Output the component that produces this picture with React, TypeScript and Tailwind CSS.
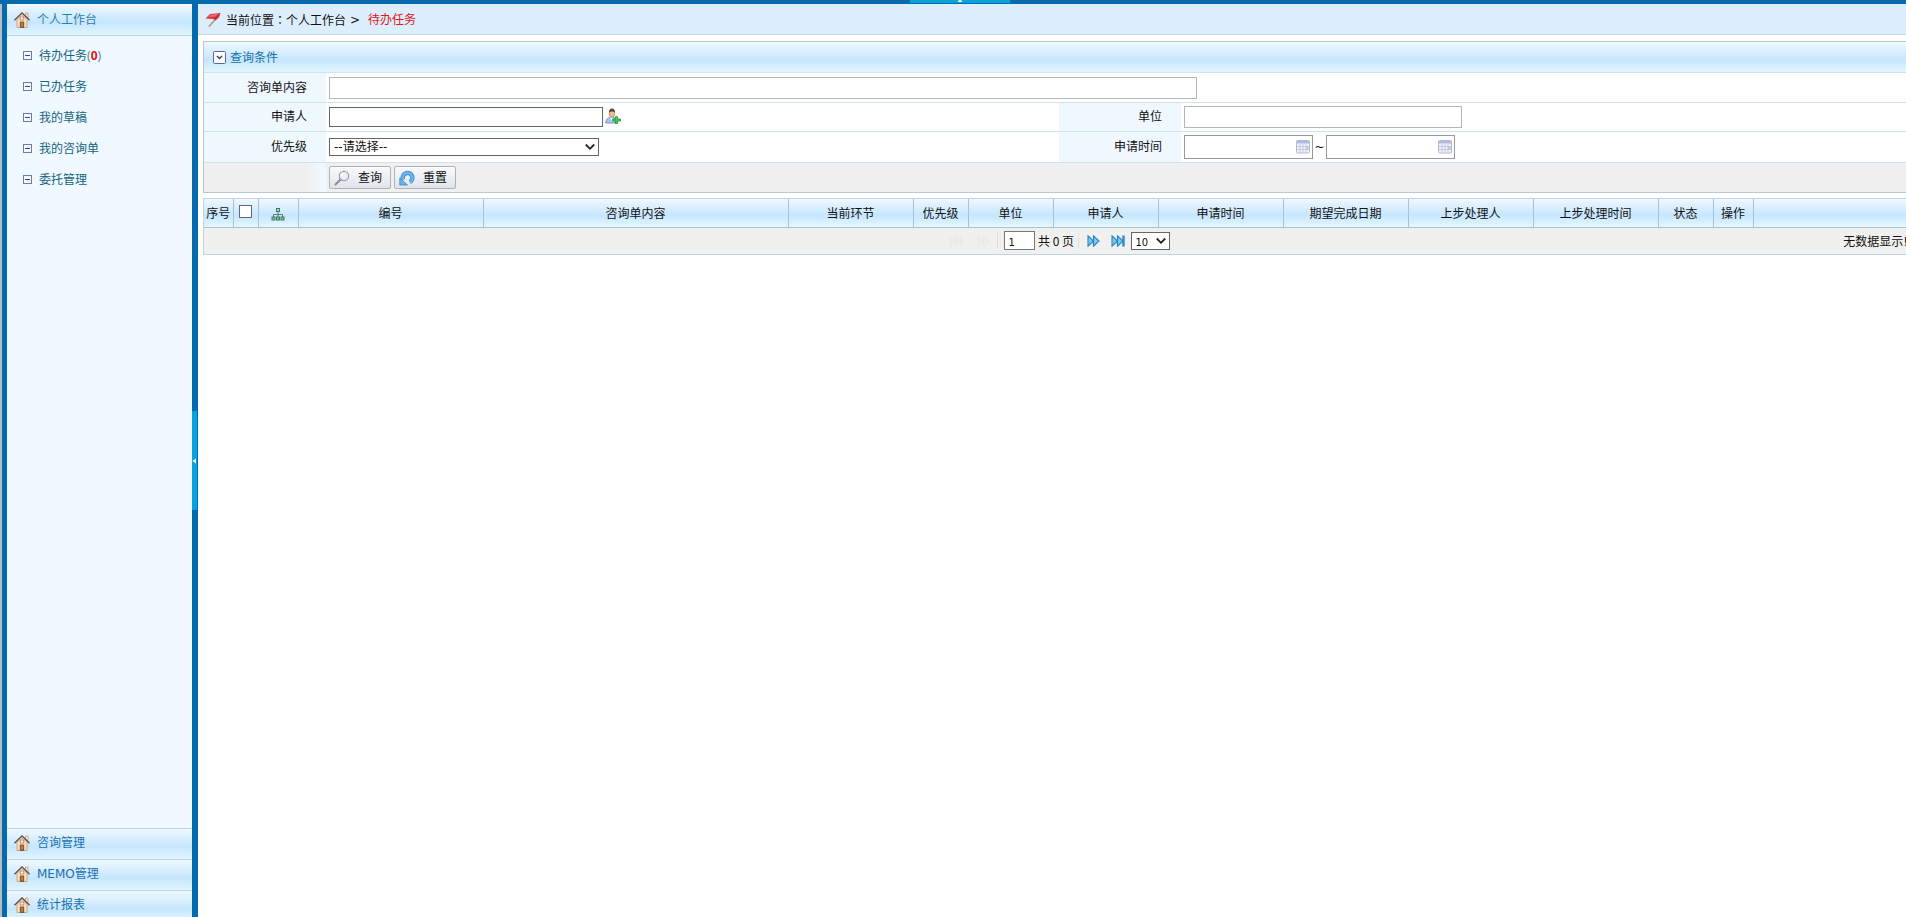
import type { ReactNode } from 'react'

const menuItems = [
  { label: '待办任务', count: 0 },
  { label: '已办任务' },
  { label: '我的草稿' },
  { label: '我的咨询单' },
  { label: '委托管理' },
]

const sections = ['咨询管理', 'MEMO管理', '统计报表']

const columns = [
  { label: '编号', width: 185 },
  { label: '咨询单内容', width: 305 },
  { label: '当前环节', width: 125 },
  { label: '优先级', width: 55 },
  { label: '单位', width: 85 },
  { label: '申请人', width: 105 },
  { label: '申请时间', width: 125 },
  { label: '期望完成日期', width: 125 },
  { label: '上步处理人', width: 125 },
  { label: '上步处理时间', width: 125 },
  { label: '状态', width: 55 },
  { label: '操作', width: 40 },
]

const barGradient = 'bg-linear-to-b from-[#eff8ff] from-0% via-[#c6e6fd] via-60% to-[#e2f6ff] to-100%'

function HouseIcon() {
  return (
    <svg width="16" height="16" viewBox="0 0 16 16" className="shrink-0" aria-hidden="true">
      <path d="M11.5 1h2.500v5.500l-2.500-2.500z" fill="#f8e4d6" stroke="#d08a6c" strokeWidth=".7" />
      <path d="M3 7.500 8 2.500l5 5V15.500H3z" fill="#fbe0bb" stroke="#c09a74" strokeWidth=".8" />
      <path d="M.5 8.200 8 .9l7.500 7.300" fill="none" stroke="#5a4a46" strokeWidth="1.300" />
      <rect x="6.200" y="5" width="3.600" height="3" fill="#fff4dd" stroke="#a87450" strokeWidth=".7" />
      <rect x="6.200" y="10" width="3.600" height="5.500" fill="#9a5c30" stroke="#6a4328" strokeWidth=".7" />
      <path d="M8 10.500v4" stroke="#e0b27a" strokeWidth=".8" />
    </svg>
  )
}

function MinusBox() {
  return (
    <svg width="9" height="9" viewBox="0 0 9 9" className="shrink-0" aria-hidden="true">
      <rect x=".5" y=".5" width="8" height="8" fill="#f5f7ff" stroke="#6a7bb0" />
      <path d="M2 4.500h5" stroke="#3a4a80" />
    </svg>
  )
}

function PinIcon() {
  return (
    <svg width="16" height="16" viewBox="0 0 16 16" className="shrink-0" aria-hidden="true">
      <path d="m11 6.500-7 8" stroke="#b59a92" strokeWidth="1.800" />
      <path d="M.5 6.500 5 2l10.500-1-1.500 4.500-3.500 3-2-1.500z" fill="#d9353a" />
      <path d="M3 5 5.500 2.700l8.500-.9-3.500 2.700z" fill="#ee6a6c" />
      <path d="m9 7 4.500-4.500" stroke="#b01c22" strokeWidth=".7" />
    </svg>
  )
}

function PersonAddIcon() {
  return (
    <svg width="16" height="16" viewBox="0 0 16 16" aria-hidden="true">
      <path d="M.8 15c0-4 2-5.500 5.700-5.500S12 11 12 15z" fill="#a9c8f2" stroke="#5d82bd" strokeWidth=".8" />
      <path d="m5 9.500 1.700 3 1.600-3z" fill="#fff" />
      <ellipse cx="7" cy="5.500" rx="2.700" ry="3.800" fill="#f1bd93" stroke="#9b6a45" strokeWidth=".6" />
      <path d="M4 5C3.800 2 5 .5 7 .5S10.200 2 10 5C9.300 3 4.700 3 4 5z" fill="#594238" />
      <path d="M10.500 8.700h2v2.300h2.800v2h-2.800v2.500h-2V13H7.800v-2h2.700z" fill="#3fd44c" stroke="#14902a" strokeWidth=".8" />
    </svg>
  )
}

function SearchIcon() {
  return (
    <svg width="16" height="16" viewBox="0 0 16 16" aria-hidden="true">
      <path d="m1.500 14.500 5-5" stroke="#8b8b93" strokeWidth="2" strokeLinecap="round" />
      <circle cx="10" cy="6" r="4.700" fill="#eeeefa" stroke="#a3a3ac" strokeWidth="1.300" />
      <path d="M7.500 5.500a3 3 0 0 1 2.500-2.300" fill="none" stroke="#fff" strokeWidth="1.200" />
    </svg>
  )
}

function ResetIcon() {
  return (
    <svg width="16" height="16" viewBox="0 0 16 16" aria-hidden="true">
      <path d="M4.200 9.800a4.800 4.800 0 1 1 6.600 2.200" fill="none" stroke="#3b87cc" strokeWidth="4.400" />
      <path d="M4.200 9.800a4.800 4.800 0 1 1 6.600 2.200" fill="none" stroke="#69b4ee" strokeWidth="3" />
      <path d="M.8 8v7h7.700z" fill="#69b4ee" stroke="#3b87cc" strokeWidth=".8" />
    </svg>
  )
}

function TreeIcon() {
  return (
    <svg width="14" height="14" viewBox="0 0 14 14" aria-hidden="true">
      <path d="M7 4v3M2.500 10V7.500h9V10M7 7.500V10" fill="none" stroke="#5f7f78" />
      <rect x="5.500" y="1.500" width="3" height="3" fill="#a8dcb4" stroke="#3f7a68" />
      <rect x="1" y="10" width="3" height="3" fill="#7fc795" stroke="#3f7a68" />
      <rect x="5.500" y="10" width="3" height="3" fill="#7fc795" stroke="#3f7a68" />
      <rect x="10" y="10" width="3" height="3" fill="#7fc795" stroke="#3f7a68" />
    </svg>
  )
}

function CalendarIcon() {
  return (
    <svg width="14" height="14" viewBox="0 0 14 14" aria-hidden="true">
      <rect x=".5" y=".5" width="13" height="12.500" rx="1" fill="#f0f3fb" stroke="#b3b8d0" />
      <path d="M1 1h12v2.500H1z" fill="#b3bbdd" />
      <path d="M1 6.500h12M1 9.500h12M4 4v9M7 4v9M10 4v9" stroke="#c3cae0" />
      <path d="M10 7h2.500v2H10z" fill="#eeb6c0" />
    </svg>
  )
}

function PagerIcon({ last }: { last?: boolean }) {
  return (
    <svg width="14" height="12" viewBox="0 0 14 12" aria-hidden="true">
      <path d="M1 .8v10.400l5.500-5.200zM6.500 .8v10.400L12 6z" fill="#7cc8ee" stroke="#2a86c2" strokeWidth="1.100" />
      {last && <path d="M12.500 .5v11" stroke="#2b8acb" strokeWidth="2.400" />}
    </svg>
  )
}

function Label({ id, children }: { id: string; children: ReactNode }) {
  return (
    <label htmlFor={id} className="flex w-[122px] shrink-0 items-center justify-end self-stretch bg-[#eff8ff] pr-[19px]">
      {children}
    </label>
  )
}

function DateInput({ id, label }: { id: string; label: string }) {
  return (
    <div className="flex h-6 w-[129px] items-center border border-[#999] bg-white pr-0.5">
      <input id={id} aria-label={label} className="h-full w-full min-w-0 px-1 outline-none" />
      <button type="button" aria-label="选择日期" className="shrink-0">
        <CalendarIcon />
      </button>
    </div>
  )
}

function Chevron() {
  return (
    <svg width="10" height="7" viewBox="0 0 10 7" className="pointer-events-none absolute top-1/2 right-1 -translate-y-1/2" aria-hidden="true">
      <path d="m.8 1 4.200 4.300L9.200 1" fill="none" stroke="#222" strokeWidth="1.800" />
    </svg>
  )
}

function Sidebar() {
  return (
    <aside className="flex w-[185px] shrink-0 flex-col bg-[#f0f9ff]">
      <a href="#" className={`flex h-8 shrink-0 items-center gap-[7px] border-b border-[#b9d3e4] px-[7px] text-[#2a7fae] ${barGradient}`}>
        <HouseIcon />
        个人工作台
      </a>
      <ul className="grow pt-1">
        {menuItems.map(item => (
          <li key={item.label}>
            <a href="#" className="flex h-[31px] items-center gap-[7px] pl-4 text-[#13647f]">
              <MinusBox />
              <span>
                {item.label}
                {item.count !== undefined && (
                  <span className="font-['Noto_Sans','Noto_Sans_CJK_SC',sans-serif] text-[#5a8a96]">
                    (<b className="text-[#e0141c]">{item.count}</b>)
                  </span>
                )}
              </span>
            </a>
          </li>
        ))}
      </ul>
      <nav className="-mb-1">
        {sections.map(name => (
          <a key={name} href="#" className={`flex h-[31px] items-center gap-[7px] border-t border-[#bfd0e0] px-[7px] pb-0.5 text-[#1670b4] ${barGradient}`}>
            <HouseIcon />
            {name}
          </a>
        ))}
      </nav>
    </aside>
  )
}

function QueryPanel() {
  return (
    <form className="border-y border-l border-[#b5c9d2]">
      <div className={`flex h-[30px] items-center gap-1 pl-[9px] text-[#1170a8] ${barGradient}`}>
        <button type="button" aria-label="收起">
          <svg width="13" height="13" viewBox="0 0 13 13" aria-hidden="true">
            <rect x=".5" y=".5" width="12" height="12" rx="1" fill="#fbfbff" stroke="#5865a0" />
            <path d="m4 5 2.500 2.500L9 5" fill="none" stroke="#333f7a" strokeWidth="1.400" />
          </svg>
        </button>
        <span className="pt-0.5">查询条件</span>
      </div>
      <div className="flex h-[30px] items-center border-t border-[#d3e1e8]">
        <Label id="content">咨询单内容</Label>
        <input id="content" className="ml-[3px] h-[22px] w-[868px] border border-[#b5b5b5] px-1" />
      </div>
      <div className="grid grid-cols-2 border-t border-[#d3e1e8]">
        <div className="flex h-7 items-center">
          <Label id="applicant">申请人</Label>
          <input id="applicant" className="ml-[3px] h-5 w-[274px] border border-[#666] px-1" />
          <button type="button" aria-label="选择人员" className="ml-0.5 pb-0.5">
            <PersonAddIcon />
          </button>
        </div>
        <div className="flex h-7 items-center">
          <Label id="unit">单位</Label>
          <input id="unit" className="ml-[3px] h-[22px] w-[278px] border border-[#b5b5b5] px-1" />
        </div>
      </div>
      <div className="grid grid-cols-2 border-t border-[#d3e1e8]">
        <div className="flex h-[30px] items-center">
          <Label id="priority">优先级</Label>
          <div className="relative ml-[3px] w-[270px]">
            <select id="priority" className="block h-[18px] w-full appearance-none border border-[#666] bg-white px-1 leading-4">
              <option>--请选择--</option>
            </select>
            <Chevron />
          </div>
        </div>
        <div className="flex h-[30px] items-center">
          <Label id="from">申请时间</Label>
          <div className="ml-[3px] flex items-center">
            <DateInput id="from" label="申请时间起" />
            <span className="w-[13px] text-center">~</span>
            <DateInput id="to" label="申请时间止" />
          </div>
        </div>
      </div>
      <div className="flex h-[30px] items-center gap-[3px] border-t border-[#d3e1e8] bg-[#f0f0f0]">
        <div className="w-[122px] self-stretch bg-linear-to-r from-[#f0f0f0] from-85% to-[#eff8ff] to-95%" />
        <button type="button" className="flex h-[23px] w-[62px] items-center gap-2 rounded-xs border border-[#adb1b8] bg-linear-to-b from-[#fafafa] to-[#dfe5ec] pl-1">
          <SearchIcon />
          查询
        </button>
        <button type="reset" className="flex h-[23px] w-[62px] items-center gap-2 rounded-xs border border-[#adb1b8] bg-linear-to-b from-[#fafafa] to-[#dfe5ec] pl-1">
          <ResetIcon />
          重置
        </button>
      </div>
    </form>
  )
}

function TaskTable() {
  const head = 'border-r border-[#a5c3d4] px-0 pt-0.5 pb-0 font-normal whitespace-nowrap'
  return (
    <div className="border-y border-l border-[#c3d5dc]">
      <table className="w-full table-fixed border-collapse">
        <colgroup>
          <col style={{ width: 29 }} />
          <col style={{ width: 25 }} />
          <col style={{ width: 40 }} />
          {columns.map(c => (
            <col key={c.label} style={{ width: c.width }} />
          ))}
          <col />
        </colgroup>
        <thead>
          <tr className={`h-7 border-b border-[#a5c3d4] ${barGradient}`}>
            <th className={head}>序号</th>
            <th className="border-r border-[#a5c3d4] px-0 pt-0 pb-0.5">
              <input type="checkbox" aria-label="全选" className="mx-auto block size-[13px] appearance-none border border-[#666] bg-white" />
            </th>
            <th className={head}>
              <span className="flex justify-center">
                <TreeIcon />
              </span>
            </th>
            {columns.map(c => (
              <th key={c.label} className={head}>{c.label}</th>
            ))}
            <th className="p-0" />
          </tr>
        </thead>
      </table>
      <div className="grid h-[26px] grid-cols-[1fr_auto_1fr] items-center bg-[#f0f0f0]">
        <div />
        <div className="flex items-center">
          <button type="button" disabled aria-label="首页" className="w-7 opacity-5 grayscale">
            <PagerIcon last />
          </button>
          <button type="button" disabled aria-label="上一页" className="w-5 opacity-5 grayscale">
            <PagerIcon />
          </button>
          <span className="mr-[6px] h-4 border-l border-[#dcdcdc]" />
          <input aria-label="页码" defaultValue="1" className="h-[19px] w-[31px] border border-[#777] bg-white px-1 pt-1 text-[10px]" />
          <span className="w-[43px] text-center font-['Noto_Sans_CJK_SC',sans-serif]">共 0 页</span>
          <span className="mr-2 h-4 border-l border-[#e0e0e0]" />
          <button type="button" aria-label="下一页" className="w-6">
            <PagerIcon />
          </button>
          <button type="button" aria-label="末页" className="w-5">
            <PagerIcon last />
          </button>
          <div className="relative w-[39px]">
            <select aria-label="每页条数" className="block h-[18px] w-full appearance-none border border-[#666] bg-white pt-0.5 pl-1 text-[10px] leading-4">
              <option>10</option>
            </select>
            <Chevron />
          </div>
        </div>
        <div className="pt-0.5 pr-[6px] text-right">无数据显示!</div>
      </div>
    </div>
  )
}

export default function App() {
  return (
    <div className="flex h-screen flex-col overflow-hidden bg-white font-['DejaVu_Sans','Noto_Sans_CJK_SC',sans-serif] text-[12px] leading-4 text-[#111]">
      <div className="flex h-1 shrink-0 justify-center bg-[#0569ad] pl-[14px]">
        <button type="button" aria-label="收起顶部" className="flex h-[3px] w-[100px] justify-center bg-[#06a3dc]">
          <svg width="6" height="2" viewBox="0 0 6 2" aria-hidden="true">
            <path d="M2 0h2l1.500 2h-5z" fill="#fff" />
          </svg>
        </button>
      </div>
      <div className="flex min-h-0 grow">
        <div className="w-[7px] shrink-0 border-l-2 border-[#b8bcbe] bg-[#0569ad]" />
        <Sidebar />
        <div className="flex w-[6px] shrink-0 items-center bg-[#0569ad]">
          <button type="button" aria-label="收起菜单" className="flex h-[99px] w-[5px] items-center bg-[#06a3dc]">
            <svg width="4" height="6" viewBox="0 0 4 6" aria-hidden="true">
              <path d="M4 .5v5L.5 3z" fill="#fff" />
            </svg>
          </button>
        </div>
        <main className="min-w-0 grow overflow-hidden">
          <div className="flex h-[31px] items-center border-b border-[#c3d9e8] bg-[#dceefc] pt-0.5 pl-[7px]">
            <PinIcon />
            <span className="ml-[5px]">
              当前位置<span className="font-['Noto_Sans_CJK_TC',sans-serif]" lang="zh-TW">：</span>个人工作台
            </span>
            <span className="mx-1">&gt;</span>
            <a href="#" className="ml-1 text-[#e0141c]">待办任务</a>
          </div>
          <div className="-mr-2 flex flex-col gap-[5px] pt-[6px] pl-[5px]">
            <QueryPanel />
            <TaskTable />
          </div>
        </main>
      </div>
    </div>
  )
}
